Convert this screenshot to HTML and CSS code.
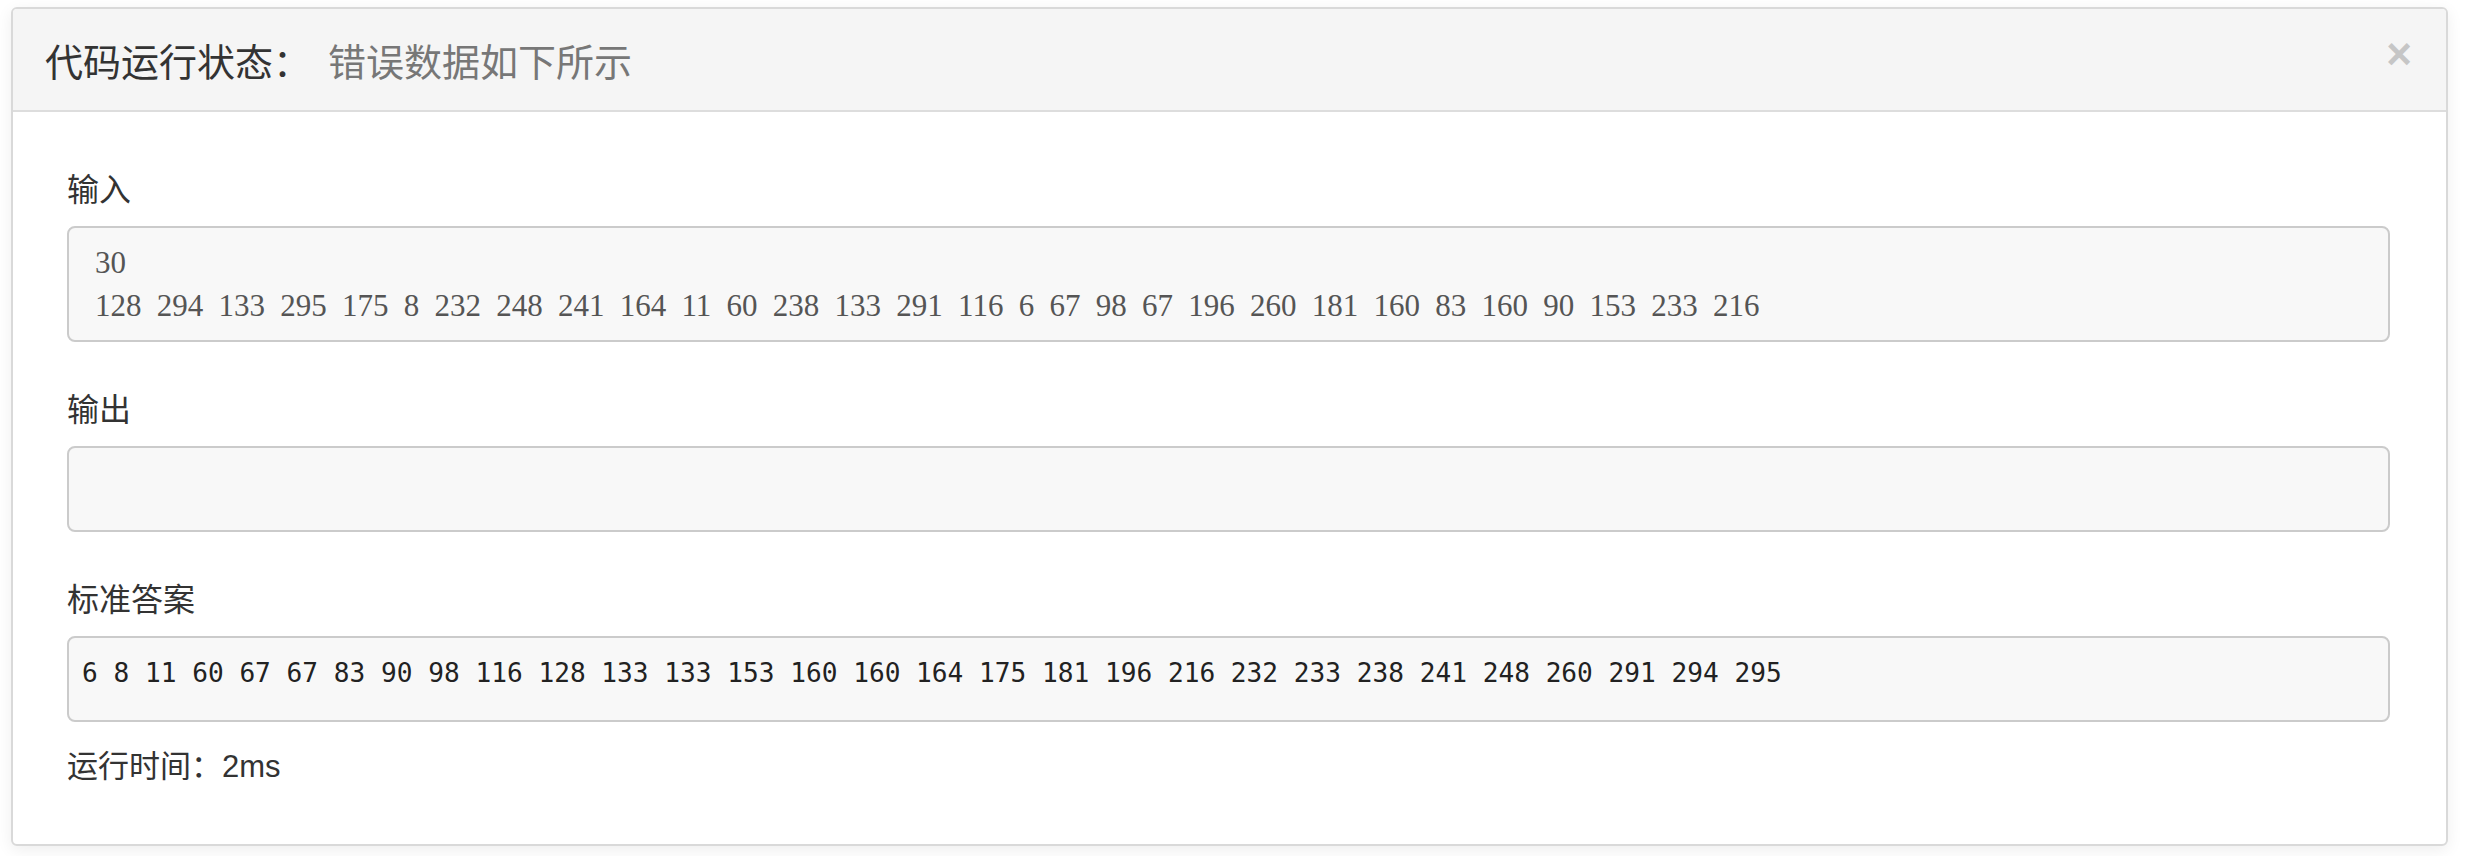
FILE: index.html
```html
<!DOCTYPE html>
<html lang="zh-CN">
<head>
<meta charset="utf-8">
<title>代码运行状态</title>
<link rel="stylesheet" href="styles.css">
</head>
<body>
<div class="page">
  <div class="modal">
    <div class="modal-header">
      <h4 class="modal-title">代码运行状态：<span class="subtitle">错误数据如下所示</span></h4>
      <span class="close">×</span>
    </div>
    <div class="modal-body">
      <div class="group">
        <div class="label">输入</div>
        <div class="box box-input">30
128 294 133 295 175 8 232 248 241 164 11 60 238 133 291 116 6 67 98 67 196 260 181 160 83 160 90 153 233 216</div>
      </div>
      <div class="group">
        <div class="label">输出</div>
        <div class="box box-code"></div>
      </div>
      <div class="group">
        <div class="label">标准答案</div>
        <div class="box box-code">6 8 11 60 67 67 83 90 98 116 128 133 133 153 160 160 164 175 181 196 216 232 233 238 241 248 260 291 294 295</div>
      </div>
      <div class="runtime">运行时间：2ms</div>
    </div>
  </div>
</div>
</body>
</html>
```

FILE: styles.css
```css
html, body {
  margin: 0;
  padding: 0;
  background: #ffffff;
}

body {
  font-family: "Liberation Sans", "Noto Sans CJK SC", sans-serif;
  color: #333333;
}

.page {
  padding: 7px 17px 10px 11px;
}

.modal {
  border: 2px solid #d9d9d9;
  border-radius: 6px;
  background: #ffffff;
  box-shadow: 0 4px 16px rgba(0, 0, 0, 0.07);
  overflow: hidden;
}

.modal-header {
  display: flex;
  align-items: center;
  justify-content: space-between;
  height: 101px;
  padding: 0 34px 0 32px;
  background: #f5f5f5;
  border-bottom: 2px solid #dddddd;
}

.modal-title {
  margin: 0;
  font-family: "Noto Sans CJK SC", sans-serif;
  font-size: 38px;
  font-weight: normal;
  line-height: 100px;
  color: #333333;
}

.subtitle {
  padding-left: 17px;
  color: #777777;
}

.close {
  font-family: "Liberation Sans", sans-serif;
  font-size: 44px;
  font-weight: bold;
  line-height: 44px;
  color: #c6c6c6;
  margin-bottom: 12px;
}

.modal-body {
  display: flex;
  flex-direction: column;
  gap: 47px;
  padding: 57px 56px 56px 54px;
}

.group {
  display: flex;
  flex-direction: column;
  gap: 14px;
}

.label,
.runtime {
  font-size: 32px;
  line-height: 43px;
  height: 43px;
  color: #333333;
}

.runtime {
  font-size: 31px;
  margin-top: -24px;
}

.box {
  box-sizing: border-box;
  background: #f8f8f8;
  border: 2px solid #cbcbcb;
  border-radius: 8px;
  white-space: pre;
  overflow: hidden;
}

.box-input {
  height: 116px;
  padding: 13px 26px 12px;
  font-family: "Liberation Serif", serif;
  font-size: 31px;
  line-height: 43px;
  word-spacing: 7.5px;
  color: #555555;
}

.box-code {
  height: 86px;
  padding: 14px 13px 12px;
  font-family: "DejaVu Sans Mono", monospace;
  font-size: 26.15px;
  line-height: 43px;
  color: #222222;
}
```
